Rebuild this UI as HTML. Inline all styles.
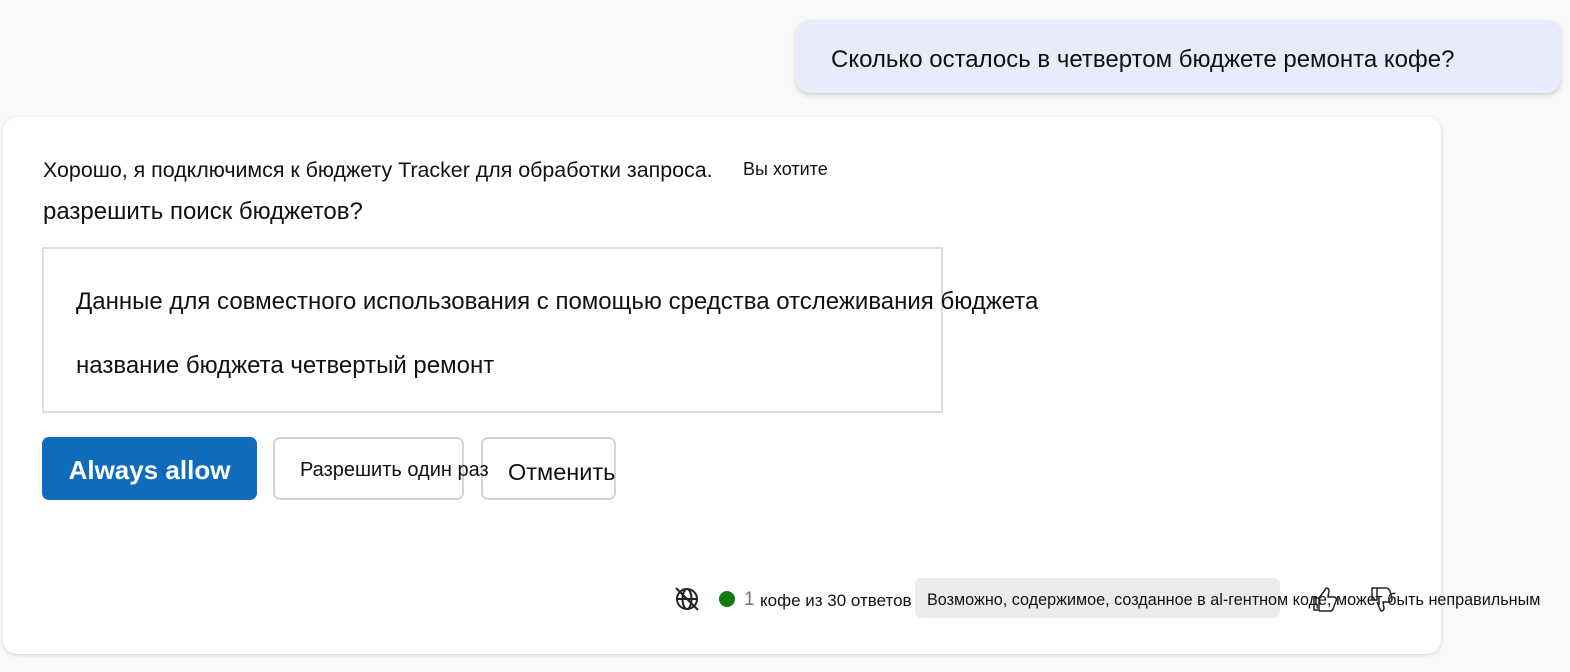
<!DOCTYPE html>
<html><head><meta charset="utf-8"><style>
body{margin:0;width:1570px;height:672px;background:#f9f9f9;font-family:"Liberation Sans",sans-serif;position:relative;overflow:hidden;color:#111}
.a{position:absolute;white-space:nowrap}
.bubble{position:absolute;left:796px;top:20px;width:765px;height:73px;background:#e8ebf9;border-radius:14px;box-shadow:0 2px 5px rgba(0,0,0,.18)}
.card{position:absolute;left:3px;top:117px;width:1438px;height:537px;background:#fff;border-radius:14px;box-shadow:0 1px 4px rgba(0,0,0,.15)}
.box{position:absolute;left:42px;top:247px;width:897px;height:162px;border:2px solid #dcdcdc}
.btn{position:absolute;border:2px solid #d3d3d3;border-radius:7px;background:#fff;box-sizing:border-box}
</style></head><body>
<div class="bubble"></div>
<div class="a" style="left:831px;top:46px;font-size:24px">Сколько осталось в четвертом бюджете ремонта кофе?</div>
<div class="card"></div>
<div class="a" style="left:43px;top:158px;font-size:21.4px">Хорошо, я подключимся к бюджету Tracker для обработки запроса.</div>
<div class="a" style="left:743px;top:159px;font-size:18px">Вы хотите</div>
<div class="a" style="left:43px;top:198px;font-size:24px">разрешить поиск бюджетов?</div>
<div class="box"></div>
<div class="a" style="left:76px;top:288px;font-size:24px">Данные для совместного использования с помощью средства отслеживания бюджета</div>
<div class="a" style="left:76px;top:352px;font-size:24px">название бюджета четвертый ремонт</div>
<div class="a" style="left:42px;top:437px;width:215px;height:63px;background:#0f6cbd;border-radius:7px;color:#fff;font-weight:bold;font-size:26px;line-height:66px;text-align:center">Always allow</div>
<div class="btn" style="left:273px;top:437px;width:191px;height:63px"></div>
<div class="btn" style="left:481px;top:437px;width:135px;height:63px"></div>
<div class="a" style="left:300px;top:459px;font-size:20px">Разрешить один раз</div>
<div class="a" style="left:508px;top:459px;font-size:23.5px">Отменить</div>
<svg class="a" style="left:673px;top:585px" width="28" height="28" viewBox="0 0 28 28" fill="none" stroke="#222" stroke-width="2"><circle cx="14" cy="14" r="10"/><ellipse cx="14" cy="14" rx="4.5" ry="10"/><path d="M4 14h20M3 3l22 22"/></svg>
<div class="a" style="left:719px;top:591px;width:16px;height:16px;border-radius:50%;background:#107c10"></div>
<div class="a" style="left:744px;top:589px;font-size:19px;color:#777">1</div>
<div class="a" style="left:760px;top:591px;font-size:17px">кофе из 30 ответов</div>
<div class="a" style="left:915px;top:578px;width:365px;height:40px;background:#ebebeb;border-radius:6px"></div>
<div class="a" style="left:927px;top:591px;font-size:16.2px">Возможно, содержимое, созданное в al-гентном коде, может быть неправильным</div>
<svg class="a" style="left:1310px;top:584px" width="95" height="30" viewBox="0 0 95 30" fill="none" stroke="#222" stroke-width="1.5"><path d="M4 14h5v12H4zM9 14l6-8c1-3 4-2 4 1l-1 6h6c2 0 3 2 2 4l-3 8c-1 2-2 2-4 2H9"/><path d="M62 16h5V4h-5zM67 4h9c2 0 3 1 4 3l2 8c0 2-1 3-3 3h-6l1 6c0 3-3 4-4 1l-3-7"/></svg>
</body></html>
